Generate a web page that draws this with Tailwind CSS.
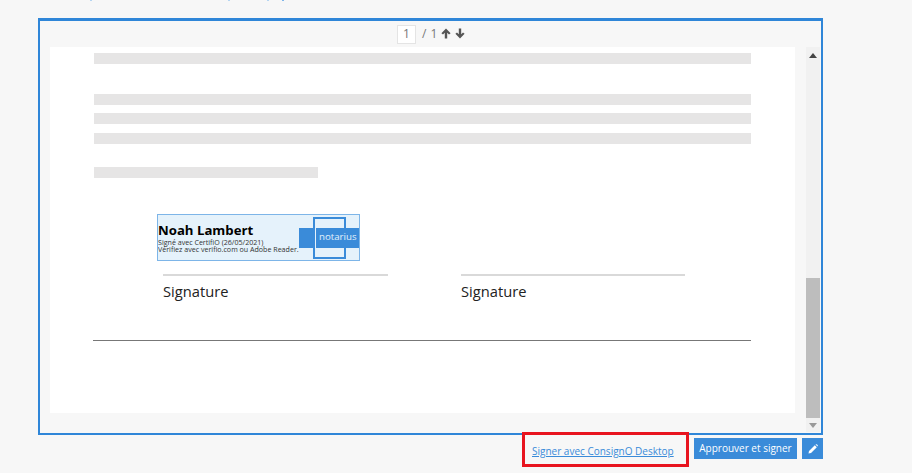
<!DOCTYPE html>
<html lang="fr">
<head>
<meta charset="UTF-8">
<title>Signature</title>
<script src="https://cdn.jsdelivr.net/npm/@tailwindcss/browser@4"></script>
</head>
<body class="bg-[#f7f7f7] font-['Open_Sans',sans-serif] h-[473px] w-[912px] overflow-hidden">
  <!-- descenders of the cut off line above -->
  <div class="flex h-px">
    <span class="ml-[90px] w-[2px] h-px bg-[#b5d5f2]"></span>
    <span class="ml-[136px] w-[2px] h-px bg-[#b5d5f2]"></span>
    <span class="ml-[37px] w-[2px] h-px bg-[#b5d5f2]"></span>
    <span class="ml-[13px] w-[2px] h-px bg-[#7fb6ea]"></span>
  </div>
  <div class="pl-[38px] pt-[17px]">
    <!-- document frame -->
    <div class="w-[785px] h-[417px] border-2 border-t-[3px] border-[#2f86d8] flex flex-col">
      <div class="h-[26px] flex items-center text-[12px] text-[#777] pl-[357px]">
        <span class="w-[19px] h-[19px] bg-white border border-[#e4e4e4] flex items-center justify-center">1</span>
        <span class="ml-[6px]">/</span>
        <span class="ml-[4px]">1</span>
        <svg class="ml-[4px] -mt-px w-[10px] h-[11px]" viewBox="0 0 10 11"><path d="M5 0.5 L9.6 5.2 L8 6.6 L6.2 4.8 V10.5 H3.8 V4.8 L2 6.6 L0.4 5.2 Z" fill="#555"/></svg>
        <svg class="ml-[4px] -mt-px w-[10px] h-[11px]" viewBox="0 0 10 11"><path d="M5 10.5 L9.6 5.8 L8 4.4 L6.2 6.2 V0.5 H3.8 V6.2 L2 4.4 L0.4 5.8 Z" fill="#555"/></svg>
      </div>
      <div class="flex flex-1 min-h-0 pl-[10px] pr-[1px]">
        <!-- page -->
        <div class="w-[745px] h-[366px] bg-white pt-[6px] pl-[44px] relative">
          <div class="w-[657px] h-[11px] bg-[#e6e5e5]"></div>
          <div class="w-[657px] h-[11px] bg-[#e6e5e5] mt-[30px]"></div>
          <div class="w-[657px] h-[11px] bg-[#e6e5e5] mt-[8px]"></div>
          <div class="w-[657px] h-[11px] bg-[#e6e5e5] mt-[9px]"></div>
          <div class="w-[224px] h-[11px] bg-[#e6e5e5] mt-[23px]"></div>
          <!-- signature stamp -->
          <div class="ml-[63px] mt-[36px] w-[203px] h-[47px] bg-[#e5f2fb] border border-[#7db5e8] relative overflow-hidden text-black">
            <div class="absolute left-[0px] top-[6px] text-[13.2px] leading-[18px] font-bold whitespace-nowrap">Noah Lambert</div>
            <div class="absolute left-[0px] top-[24px] text-[7.1px] leading-[7px] text-[#333] whitespace-nowrap">Signé avec CertifiO (26/05/2021)<br>Vérifiez avec verifio.com ou Adobe Reader.</div>
            <div class="absolute left-[141px] top-[13px] w-[16px] h-[20px] bg-[#3a8bd9]"></div>
            <div class="absolute left-[155px] top-[2px] w-[33px] h-[42px] border-2 border-[#3a8bd9]"></div>
            <div class="absolute left-[158px] top-[13px] w-[45px] h-[20px] bg-[#3a8bd9] text-[#e3f1fc] text-[9.7px] leading-[18px] pl-[3px]">notarius</div>
          </div>
          <div class="flex ml-[69px] mt-[12px]">
            <div class="w-[225px] mr-[73px]">
              <div class="h-[2px] mt-px bg-[#d9d9d9]"></div>
              <div class="text-[14.7px] leading-[20px] mt-[5px] text-[#222]">Signature</div>
            </div>
            <div class="w-[224px]">
              <div class="h-[2px] mt-px bg-[#d9d9d9]"></div>
              <div class="text-[14.7px] leading-[20px] mt-[5px] text-[#222]">Signature</div>
            </div>
          </div>
          <div class="w-[658px] -ml-[1px] h-px bg-[#777] mt-[39px]"></div>
        </div>
        <!-- scrollbar -->
        <div class="ml-[11px] w-[14px] h-[385px] bg-[#f1f1f1] flex flex-col items-center">
          <div class="h-[17px] flex items-center"><div class="w-0 h-0 border-x-[4px] border-x-transparent border-b-[5px] border-b-[#444]"></div></div>
          <div class="mt-[214px] w-[14px] h-[140px] bg-[#bdbdbd]"></div>
          <div class="h-[14px] flex items-center"><div class="w-0 h-0 border-x-[4px] border-x-transparent border-t-[5px] border-t-[#999]"></div></div>
        </div>
      </div>
    </div>
    <!-- actions -->
    <div class="w-[785px] flex justify-end items-start -mt-[3px]">
      <div class="w-[167px] h-[35px] border-[3px] border-[#e8141f] flex items-center pl-[7px] mr-[5px] pt-[4px]">
        <a href="#" class="text-[10px] text-[#3a8bd9] underline whitespace-nowrap">Signer avec ConsignO Desktop</a>
      </div>
      <button class="mt-[6px] w-[103px] h-[21px] bg-[#3a8bd9] text-white text-[10px] leading-[20px] pb-[2px]">Approuver et signer</button>
      <button class="mt-[6px] ml-[5px] w-[21px] h-[21px] bg-[#3a8bd9] flex items-center justify-center">
        <svg class="w-[10px] h-[10px]" viewBox="0 0 10 10"><path d="M0.5 9.5 L1 7 L6.8 1.2 L8.8 3.2 L3 9 Z M7.5 0.5 L8 0.2 Q8.5 0 9 0.4 L9.6 1 Q10 1.5 9.7 2 L9.5 2.5 Z" fill="#fff"/></svg>
      </button>
    </div>
  </div>
</body>
</html>
